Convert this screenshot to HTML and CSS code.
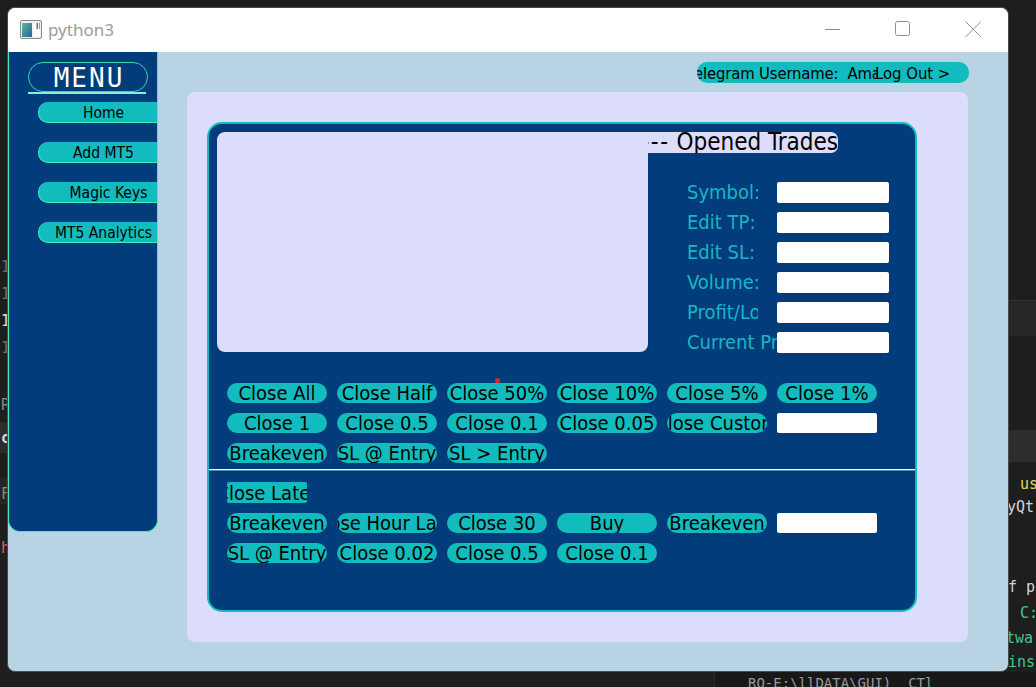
FILE: index.html
```html
<!DOCTYPE html>
<html lang="en">
<head>
<meta charset="utf-8">
<title>python3</title>
<link rel="stylesheet" href="styles.css">
</head>
<body>
<div class="editor">
  <div class="band band-r1"></div>
  <div class="band band-r2"></div>
  <div class="band band-l1"></div>
  <div class="band band-l2"></div>
  <div class="band band-bottom"></div>
  <span class="code gut g1">1</span>
  <span class="code gut g2">1</span>
  <span class="code gut g3">1</span>
  <span class="code gut g4">1</span>
  <span class="code gut g5">R</span>
  <span class="code gut g6">c</span>
  <span class="code gut g7">F</span>
  <span class="code gut g8">h</span>
  <span class="code r1">us</span>
  <span class="code r2">yQt</span>
  <span class="code r3">f p</span>
  <span class="code r4">C:</span>
  <span class="code r5">twa</span>
  <span class="code r6">ins</span>
  <span class="code b1">RO-E:\llDATA\GUI)  CTl</span>
</div>

<div class="window">
  <div class="titlebar">
    <svg class="app-icon" width="22" height="19" viewBox="0 0 22 19">
      <defs>
        <linearGradient id="ig" x1="0" y1="0" x2="1" y2="1">
          <stop offset="0" stop-color="#56c08e"/>
          <stop offset="1" stop-color="#2c5f9c"/>
        </linearGradient>
      </defs>
      <rect x="0.5" y="0.5" width="21" height="18" rx="1.5" fill="#eeeeee" stroke="#8a8a8a"/>
      <rect x="2" y="3" width="10" height="14" fill="url(#ig)"/>
      <rect x="13" y="3" width="7" height="14" fill="#fbfbfb"/>
      <rect x="16.5" y="3" width="1.5" height="6" fill="#6f6f6f"/>
      <rect x="19" y="3" width="1" height="6" fill="#9a9a9a"/>
    </svg>
    <span class="title">python3</span>
    <div class="controls">
      <div class="ctrl"><svg width="16" height="16" viewBox="0 0 16 16"><line x1="0" y1="8.5" x2="15" y2="8.5" stroke="#8e8e8e"/></svg></div>
      <div class="ctrl"><svg width="16" height="16" viewBox="0 0 16 16"><rect x="0.5" y="0.5" width="14" height="14" rx="2" fill="none" stroke="#8e8e8e"/></svg></div>
      <div class="ctrl"><svg width="17" height="17" viewBox="0 0 17 17"><path d="M0.5 0.5 L16 16 M16 0.5 L0.5 16" stroke="#8e8e8e" fill="none"/></svg></div>
    </div>
  </div>

  <div class="content">
    <aside class="sidebar">
      <div class="menu-title">MENU</div>
      <div class="menu-line"></div>
      <div class="nav-btn">Home</div>
      <div class="nav-btn">Add MT5</div>
      <div class="nav-btn nav-shift">Magic Keys</div>
      <div class="nav-btn">MT5 Analytics</div>
    </aside>

    <main class="main">
      <div class="userbar">
        <div class="user-pill">
          <span class="user-name">Telegram Username:&nbsp; Amanda</span>
          <span class="logout">Log Out &gt;</span>
        </div>
      </div>

      <section class="panel">
        <div class="frame">
          <span class="cursor-dot"></span>
          <div class="top">
            <div class="trades-box"></div>
            <div class="details">
              <div class="details-title"><span><span class="dashes">---</span> Opened Trades</span></div>
              <div class="form">
                <div class="row"><span class="lbl">Symbol:</span><span class="field"></span></div>
                <div class="row"><span class="lbl">Edit TP:</span><span class="field"></span></div>
                <div class="row"><span class="lbl">Edit SL:</span><span class="field"></span></div>
                <div class="row"><span class="lbl">Volume:</span><span class="field"></span></div>
                <div class="row"><span class="lbl">Profit/Loss:</span><span class="field"></span></div>
                <div class="row"><span class="lbl lbl-wide">Current Price:</span><span class="field"></span></div>
              </div>
            </div>
          </div>

          <div class="btn-grid">
            <div class="btn">Close All</div>
            <div class="btn">Close Half</div>
            <div class="btn">Close 50%</div>
            <div class="btn">Close 10%</div>
            <div class="btn">Close 5%</div>
            <div class="btn">Close 1%</div>
            <div class="btn">Close 1</div>
            <div class="btn">Close 0.5</div>
            <div class="btn">Close 0.1</div>
            <div class="btn">Close 0.05</div>
            <div class="btn">Close Custom</div>
            <div class="small-field"></div>
            <div class="btn">Breakeven</div>
            <div class="btn">SL @ Entry</div>
            <div class="btn">SL &gt; Entry</div>
          </div>

          <div class="sep"></div>

          <div class="late">Close Later</div>

          <div class="btn-grid lower">
            <div class="btn">Breakeven</div>
            <div class="btn">Close Hour Later</div>
            <div class="btn">Close 30</div>
            <div class="btn">Buy</div>
            <div class="btn">Breakeven</div>
            <div class="small-field"></div>
            <div class="btn">SL @ Entry</div>
            <div class="btn">Close 0.02</div>
            <div class="btn">Close 0.5</div>
            <div class="btn">Close 0.1</div>
          </div>
        </div>
      </section>
    </main>
  </div>
</div>
</body>
</html>
```

FILE: styles.css
```css
* {
  box-sizing: border-box;
}

html,
body {
  margin: 0;
  padding: 0;
}

body {
  width: 1036px;
  height: 687px;
  overflow: hidden;
  position: relative;
  background: #1e1e1e;
  font-family: "DejaVu Sans Condensed", "DejaVu Sans", sans-serif;
}

/* ---------- background code editor (desktop behind the window) ---------- */
.editor {
  position: absolute;
  inset: 0;
}

.band {
  position: absolute;
}

.band-r1 {
  left: 1009px;
  top: 300px;
  width: 27px;
  height: 36px;
  background: #262626;
  border-top: 1px solid #333;
}

.band-r2 {
  left: 1009px;
  top: 430px;
  width: 27px;
  height: 32px;
  background: #2d2d2d;
}

.band-l1 {
  left: 0;
  top: 422px;
  width: 8px;
  height: 31px;
  background: #2d2d2d;
}

.band-l2 {
  left: 0;
  top: 478px;
  width: 8px;
  height: 26px;
  background: #262626;
}

.band-bottom {
  left: 714px;
  top: 672px;
  width: 322px;
  height: 15px;
  background: #181818;
  border-left: 1px solid #2c2c2c;
}

.code {
  position: absolute;
  font-family: "DejaVu Sans Mono", monospace;
  font-size: 15px;
  line-height: 15px;
  color: #cfcfcf;
  white-space: pre;
}

.gut {
  left: 1px;
  color: #6e6e6e;
}

.g1 { top: 260px; }
.g2 { top: 287px; }
.g3 { top: 314px; color: #e0e0e0; }
.g4 { top: 341px; }
.g5 { top: 398px; color: #8a8a8a; }
.g6 { top: 431px; color: #d8d8d8; font-weight: bold; }
.g7 { top: 487px; color: #8a8a8a; }
.g8 { top: 541px; color: #e06060; }

.r1 { left: 1020px; top: 477px; color: #dcdc6a; }
.r2 { left: 1007px; top: 500px; color: #d4d4d4; }
.r3 { left: 1008px; top: 580px; color: #d4d4d4; }
.r4 { left: 1020px; top: 606px; color: #3ec98a; }
.r5 { left: 1006px; top: 631px; color: #3ec98a; }
.r6 { left: 1008px; top: 655px; color: #3ec98a; }
.b1 { left: 748px; top: 676px; color: #9a9a9a; font-size: 14px; }

/* ---------- window ---------- */
.window {
  position: relative;
  margin: 7px 0 0 7px;
  width: 1002px;
  height: 665px;
  border: 1px solid #4a4a4a;
  border-radius: 8px;
  overflow: hidden;
  display: flex;
  flex-direction: column;
  background: #b8d3e3;
}

.titlebar {
  flex: none;
  height: 44px;
  background: #ffffff;
  display: flex;
  align-items: center;
  padding-left: 12px;
}

.app-icon {
  flex: none;
  margin-top: -1px;
}

.title {
  margin-left: 6px;
  font-family: "Noto Sans", sans-serif;
  font-size: 17px;
  color: #9b9b9b;
  margin-top: -2px;
}

.controls {
  margin-left: auto;
  display: flex;
  height: 100%;
}

.ctrl {
  width: 70px;
  display: flex;
  align-items: center;
  justify-content: center;
  padding-bottom: 2px;
}

.content {
  flex: 1;
  display: flex;
  align-items: flex-start;
}

/* ---------- sidebar ---------- */
.sidebar {
  flex: none;
  width: 150px;
  height: 480px;
  background: #033c7a;
  border: 1px solid #3defb8;
  border-top: none;
  border-radius: 0 0 12px 12px;
  padding-top: 10px;
  overflow: hidden;
}

.menu-title {
  margin-left: 19px;
  width: 120px;
  height: 30px;
  border: 1px solid #2fd8b0;
  border-radius: 15px;
  color: #ffffff;
  font-family: "DejaVu Sans Mono", monospace;
  font-size: 26px;
  line-height: 30px;
  letter-spacing: 2px;
  text-align: center;
  padding-left: 2px;
}

.menu-line {
  margin-left: 19px;
  width: 118px;
  height: 2px;
  background: #7ef6d2;
}

.nav-btn {
  margin-left: 29px;
  width: 130px;
  height: 21px;
  background: #12bcbe;
  border-radius: 10px 0 0 10px;
  border-bottom: 1.5px solid #3defb8;
  border-left: 1px solid #3defb8;
  color: #000;
  font-size: 15.5px;
  line-height: 22px;
  text-align: center;
  white-space: nowrap;
  margin-top: 19px;
}

.menu-line + .nav-btn {
  margin-top: 8px;
}

.nav-shift {
  padding-left: 10px;
}

/* ---------- main ---------- */
.main {
  flex: none;
  width: 781px;
  margin-left: 29px;
  padding-top: 10px;
  display: flex;
  flex-direction: column;
}

.userbar {
  display: flex;
  justify-content: flex-end;
  margin-right: -1px;
}

.user-pill {
  width: 272px;
  height: 21px;
  border-radius: 10px;
  background: #12bcbe;
  display: flex;
  align-items: center;
  overflow: hidden;
  color: #000;
  font-size: 16.5px;
  line-height: 21px;
  white-space: nowrap;
}

.user-name {
  flex: none;
  width: 181px;
  overflow: hidden;
  text-indent: -9px;
  padding-top: 1px;
  letter-spacing: -0.15px;
}

.logout {
  flex: none;
  margin-left: -3px;
  font-size: 16.5px;
  padding-top: 1px;
}

.panel {
  margin-top: 9px;
  height: 550px;
  background: #dcdcfc;
  border-radius: 8px;
  padding: 30px 0 0 20px;
}

.frame {
  position: relative;
  width: 710px;
  height: 490px;
  background: #033c7a;
  border: 2px solid #12bcbe;
  border-radius: 15px;
  overflow: hidden;
}

.cursor-dot {
  position: absolute;
  left: 286px;
  top: 254px;
  width: 5px;
  height: 5px;
  border-radius: 50%;
  background: #e8201e;
}

.top {
  display: flex;
  padding: 8px 0 0 8px;
}

.trades-box {
  flex: none;
  width: 431px;
  height: 220px;
  background: #dcdcfc;
  border-radius: 8px 0 8px 8px;
}

.details {
  flex: none;
}

.details-title {
  width: 190px;
  height: 21px;
  background: #dcdcfc;
  border-radius: 0 7px 7px 0;
  display: flex;
  justify-content: flex-end;
  overflow: hidden;
  color: #000;
  font-size: 24px;
  line-height: 21px;
  white-space: nowrap;
}

.dashes {
  letter-spacing: 1.6px;
}

.form {
  margin: 29px 0 0 39px;
  display: flex;
  flex-direction: column;
  gap: 9px;
}

.row {
  display: flex;
  height: 21px;
  align-items: center;
}

.lbl {
  flex: none;
  width: 90px;
  color: #18b6c3;
  font-size: 20px;
  line-height: 21px;
  white-space: nowrap;
  overflow: hidden;
  clip-path: inset(-4px 19px -4px 0);
}

.lbl-wide {
  clip-path: none;
}

.field {
  flex: none;
  width: 112px;
  height: 21px;
  background: #ffffff;
  border-radius: 2px;
}

.btn-grid {
  margin: 30px 0 0 18px;
  display: grid;
  grid-template-columns: repeat(6, 100px);
  grid-auto-rows: 20px;
  column-gap: 10px;
  row-gap: 10px;
}

.btn {
  height: 20px;
  border-radius: 10px;
  background: #12bcbe;
  color: #000;
  font-size: 20px;
  line-height: 20px;
  white-space: nowrap;
  display: flex;
  justify-content: center;
  overflow: hidden;
}

.small-field {
  height: 20px;
  background: #ffffff;
  border-radius: 2px;
}

.sep {
  margin-top: 6px;
  height: 1px;
  background: #ffffff;
  box-shadow: 0 1px 0 rgba(255, 255, 255, 0.35);
}

.late {
  margin: 12px 0 0 18px;
  width: 80px;
  height: 21px;
  background: #12bcbe;
  border-radius: 2px;
  color: #000;
  font-size: 20px;
  line-height: 22px;
  white-space: nowrap;
  display: flex;
  justify-content: center;
  overflow: hidden;
}

.lower {
  margin-top: 10px;
}
```
